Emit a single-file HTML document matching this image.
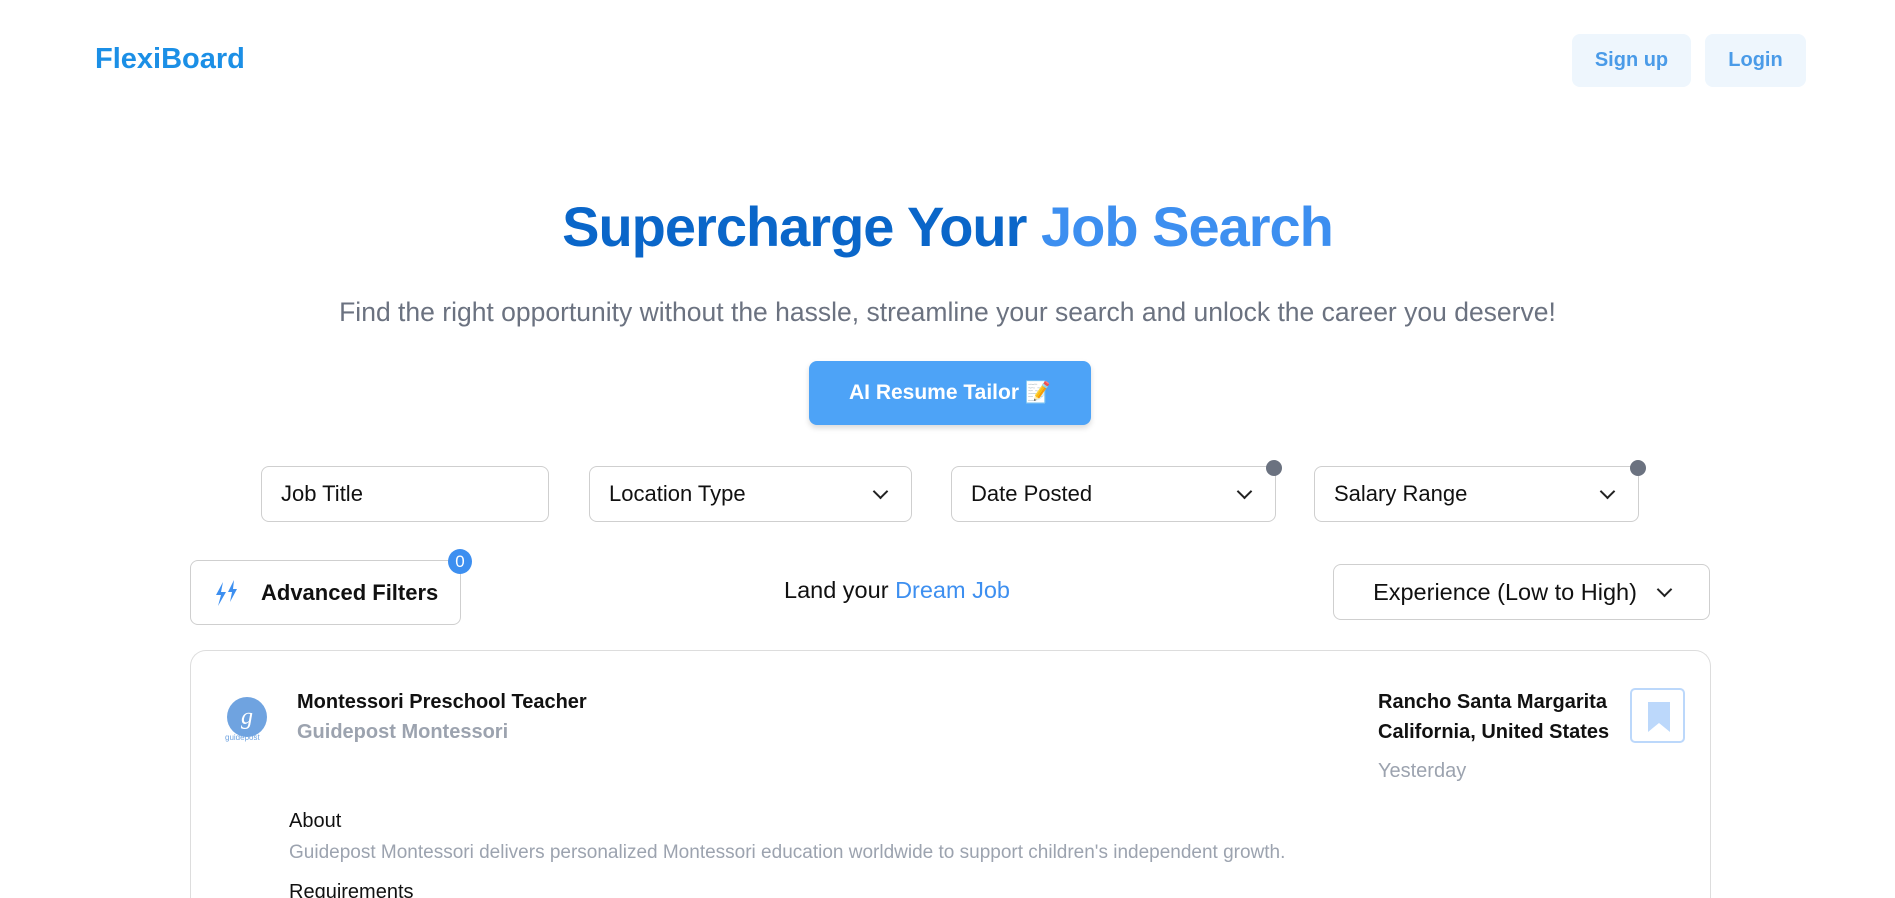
<!DOCTYPE html>
<html style="width:1895px;height:898px;overflow:hidden"><head><meta charset="utf-8"><style>
*{box-sizing:border-box;margin:0;padding:0}
body{width:1895px;height:898px;overflow:hidden;background:#fff;font-family:"Liberation Sans",sans-serif;color:#111;position:relative}
.a{position:absolute}
.btn{position:absolute;background:#eef6fd;color:#4a9be8;border-radius:8px;font-size:20px;font-weight:bold;display:flex;align-items:center;justify-content:center}
.box{position:absolute;border:1px solid #cfcfcf;border-radius:8px;display:flex;align-items:center;font-size:22px;color:#111;padding:0 19px;justify-content:space-between}
.chev{width:11px;height:11px;border-right:2.5px solid #222;border-bottom:2.5px solid #222;transform:rotate(45deg);margin-top:-6px;margin-right:6px}
.dot{position:absolute;width:16px;height:16px;border-radius:50%;background:#6b7280}
</style></head><body>
<div class="a" style="left:95px;top:43px;font-size:29px;font-weight:bold;color:#1b8fe6">FlexiBoard</div>
<div class="btn" style="left:1572px;top:34px;width:119px;height:53px">Sign up</div>
<div class="btn" style="left:1705px;top:34px;width:101px;height:53px">Login</div>
<div class="a" style="left:0;width:1895px;top:194px;text-align:center;font-size:56px;font-weight:bold;color:#0a66c9;letter-spacing:-1px">Supercharge Your <span style="color:#3d8ff0">Job Search</span></div>
<div class="a" style="left:0;width:1895px;top:297px;text-align:center;font-size:26.5px;color:#6b7280">Find the right opportunity without the hassle, streamline your search and unlock the career you deserve!</div>
<div class="a" style="left:809px;top:361px;width:282px;height:64px;background:#4da3f7;border-radius:8px;color:#fff;font-size:21px;font-weight:bold;display:flex;align-items:center;justify-content:center;box-shadow:0 3px 6px rgba(0,0,0,.15)">AI Resume Tailor&nbsp;📝</div>
<div class="box" style="left:261px;top:466px;width:288px;height:56px">Job Title</div>
<div class="box" style="left:589px;top:466px;width:323px;height:56px">Location Type<span class="chev"></span></div>
<div class="box" style="left:951px;top:466px;width:325px;height:56px">Date Posted<span class="chev"></span></div>
<div class="dot" style="left:1266px;top:460px"></div>
<div class="box" style="left:1314px;top:466px;width:325px;height:56px">Salary Range<span class="chev"></span></div>
<div class="dot" style="left:1630px;top:460px"></div>
<div class="box" style="left:190px;top:560px;width:271px;height:65px;justify-content:flex-start;font-weight:bold;padding-left:22px">
<svg width="30" height="30" viewBox="0 0 30 30" style="margin-right:18px"><path d="M10 4 L3 17 L8 17 L5 28 L13 14 L8 14 Z M21 2 L15 14 L19 14 L17 24 L24 11 L20 11 Z" fill="#3d8ff0"/></svg>Advanced Filters</div>
<div class="a" style="left:448px;top:549px;width:24px;height:25px;border-radius:50%;background:#3d8ff0;color:#fff;font-size:17px;display:flex;align-items:center;justify-content:center">0</div>
<div class="a" style="left:650px;width:494px;top:577px;text-align:center;font-size:23.5px">Land your <span style="color:#3d8ff0">Dream Job</span></div>
<div class="box" style="left:1333px;top:564px;width:377px;height:56px;justify-content:center;gap:22px;font-size:23.5px">Experience (Low to High)<span class="chev" style="margin-right:0"></span></div>
<div class="a" style="left:190px;top:650px;width:1521px;height:248px;border:1px solid #ddd;border-bottom:none;border-radius:16px 16px 0 0"></div>
<div class="a" style="left:227px;top:697px;width:40px;height:40px;border-radius:50%;background:#6fa3e0;color:#fff;font-size:24px;font-style:italic;display:flex;align-items:center;justify-content:center;font-family:'Liberation Serif',serif">g</div>
<div class="a" style="left:225px;top:733px;font-size:8px;color:#6fa3e0">guidepost</div>
<div class="a" style="left:297px;top:691px;font-size:20px;font-weight:bold">Montessori Preschool Teacher</div>
<div class="a" style="left:297px;top:721px;font-size:20px;font-weight:bold;color:#9ca3af">Guidepost Montessori</div>
<div class="a" style="left:1378px;top:687px;font-size:20px;font-weight:bold;line-height:30px">Rancho Santa Margarita<br>California, United States</div>
<div class="a" style="left:1378px;top:760px;font-size:20px;color:#9ca3af">Yesterday</div>
<div class="a" style="left:1630px;top:688px;width:55px;height:55px;border:2px solid #bcd8fb;border-radius:5px"><div style="position:absolute;left:16px;top:12px;width:22px;height:30px;background:#bcd8fb;clip-path:polygon(0 0,100% 0,100% 100%,50% 70%,0 100%)"></div></div>
<div class="a" style="left:289px;top:810px;font-size:20px">About</div>
<div class="a" style="left:289px;top:842px;font-size:19px;color:#9ca3af">Guidepost Montessori delivers personalized Montessori education worldwide to support children's independent growth.</div>
<div class="a" style="left:289px;top:881px;font-size:20px">Requirements</div>
</body></html>
